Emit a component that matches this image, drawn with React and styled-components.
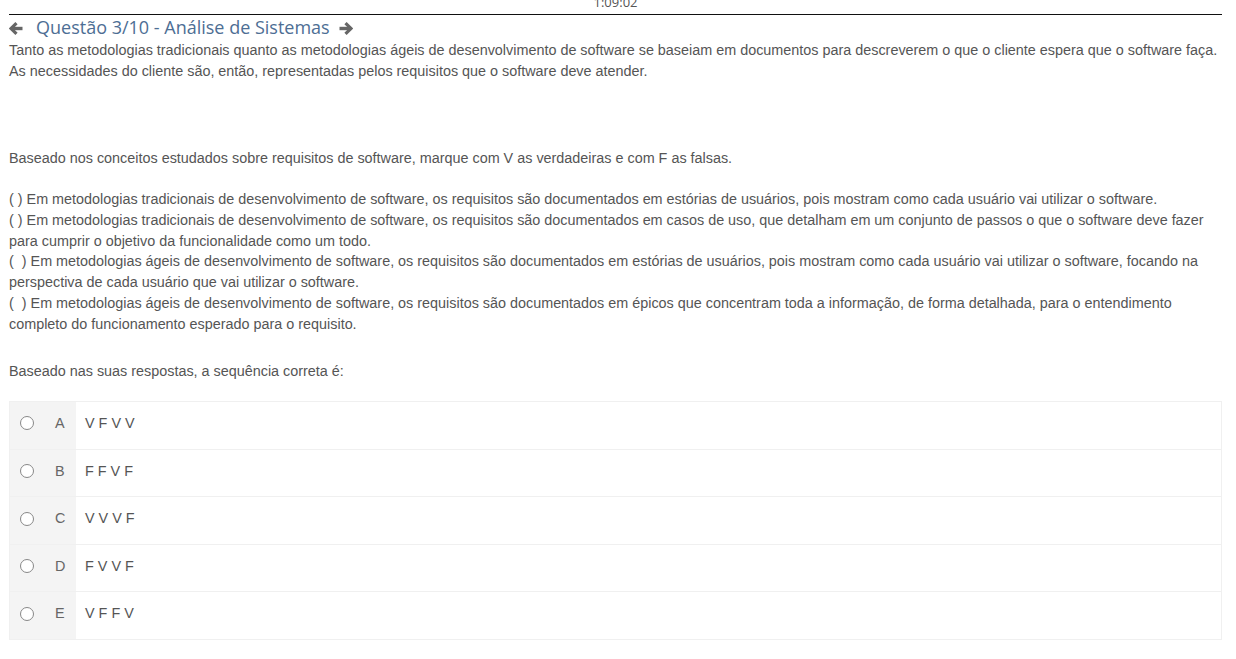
import React from "react";
import styled, { createGlobalStyle } from "styled-components";

const GlobalStyle = createGlobalStyle`
  html, body {
    margin: 0;
    padding: 0;
    background: #fff;
  }
  body {
    font-family: "Liberation Sans", Arial, sans-serif;
  }
`;

const options = [
  { letter: "A", text: "V F V V" },
  { letter: "B", text: "F F V F" },
  { letter: "C", text: "V V V F" },
  { letter: "D", text: "F V V F" },
  { letter: "E", text: "V F F V" },
];

const statements = [
  "( ) Em metodologias tradicionais de desenvolvimento de software, os requisitos são documentados em estórias de usuários, pois mostram como cada usuário vai utilizar o software.",
  "( ) Em metodologias tradicionais de desenvolvimento de software, os requisitos são documentados em casos de uso, que detalham em um conjunto de passos o que o software deve fazer para cumprir o objetivo da funcionalidade como um todo.",
  "(\u00a0 ) Em metodologias ágeis de desenvolvimento de software, os requisitos são documentados em estórias de usuários, pois mostram como cada usuário vai utilizar o software, focando na perspectiva de cada usuário que vai utilizar o software.",
  "(\u00a0 ) Em metodologias ágeis de desenvolvimento de software, os requisitos são documentados em épicos que concentram toda a informação, de forma detalhada, para o entendimento completo do funcionamento esperado para o requisito.",
];

const Arrow = ({ dir }) => (
  <svg
    width="14"
    height="13"
    viewBox="0 0 14 13"
    style={dir === "right" ? { transform: "scaleX(-1)" } : undefined}
  >
    <polyline
      points="7.5,1.2 2,6.5 7.5,11.8"
      fill="none"
      stroke="currentColor"
      strokeWidth="3.2"
      strokeLinejoin="miter"
    />
    <line x1="2.5" y1="6.5" x2="13.5" y2="6.5" stroke="currentColor" strokeWidth="3.4" />
  </svg>
);

export default function App() {
  return (
    <>
      <GlobalStyle />
      <Page>
        <Timer>1:09:02</Timer>
        <Header>
          <NavArrow $side="left">
            <Arrow dir="left" />
          </NavArrow>
          <Title>Questão 3/10 - Análise de Sistemas</Title>
          <NavArrow $side="right">
            <Arrow dir="right" />
          </NavArrow>
        </Header>
        <Text>
          Tanto as metodologias tradicionais quanto as metodologias ágeis de
          desenvolvimento de software se baseiam em documentos para descreverem
          o que o cliente espera que o software faça. As necessidades do
          cliente são, então, representadas pelos requisitos que o software
          deve atender.
        </Text>
        <Text $top="66.4px">
          Baseado nos conceitos estudados sobre requisitos de software, marque
          com V as verdadeiras e com F as falsas.
        </Text>
        <Text $top="20.2px">
          {statements.map((s, i) => (
            <span key={i}>
              {s}
              {i < statements.length - 1 && <br />}
            </span>
          ))}
        </Text>
        <Text $top="26px">Baseado nas suas respostas, a sequência correta é:</Text>
        <Options>
          {options.map((o) => (
            <Option key={o.letter}>
              <Marker>
                <Radio />
                <Letter>{o.letter}</Letter>
              </Marker>
              <Answer>{o.text}</Answer>
            </Option>
          ))}
        </Options>
      </Page>
    </>
  );
}

const Page = styled.div`
  padding: 0 14px 0 9px;
`;

const Timer = styled.div`
  height: 14px;
  line-height: 4px;
  text-align: center;
  font-family: "Open Sans", sans-serif;
  font-size: 13px;
  color: #555;
  border-bottom: 1px solid #111;
  overflow: hidden;
`;

const Header = styled.div`
  display: flex;
  align-items: center;
  height: 25px;
`;

const NavArrow = styled.span`
  display: flex;
  align-items: center;
  color: #666;
  margin-top: 1px;
  margin-right: ${(p) => (p.$side === "left" ? "13px" : "0")};
  margin-left: ${(p) => (p.$side === "right" ? "9px" : "0")};
`;

const Title = styled.h1`
  margin: 0;
  font-family: "Open Sans", sans-serif;
  font-weight: 400;
  font-size: 18px;
  line-height: 25px;
  color: #4d6e94;
`;

const Text = styled.p`
  margin: ${(p) => p.$top || "0"} -1px 0 0;
  font-size: 14.38px;
  line-height: 20.8px;
  color: #555;
`;

const Options = styled.div`
  margin-top: 19.6px;
  border: 1px solid #f0f0f0;
`;

const Option = styled.div`
  display: flex;
  height: 46.6px;
  border-bottom: 1px solid #f0f0f0;
  &:last-child {
    border-bottom: none;
  }
`;

const Marker = styled.div`
  display: flex;
  align-items: flex-start;
  width: 66px;
  flex-shrink: 0;
  background: #f4f4f4;
  padding-top: 14px;
  box-sizing: border-box;
`;

const Radio = styled.span`
  width: 12px;
  height: 12px;
  border: 1px solid #888;
  border-radius: 50%;
  margin-left: 10px;
  margin-top: 0.5px;
  background: #fff;
`;

const Letter = styled.span`
  margin-left: 21px;
  font-size: 14.4px;
  line-height: 14px;
  color: #666;
`;

const Answer = styled.div`
  padding: 14px 0 0 9px;
  font-size: 14.4px;
  line-height: 14px;
  color: #555;
`;
